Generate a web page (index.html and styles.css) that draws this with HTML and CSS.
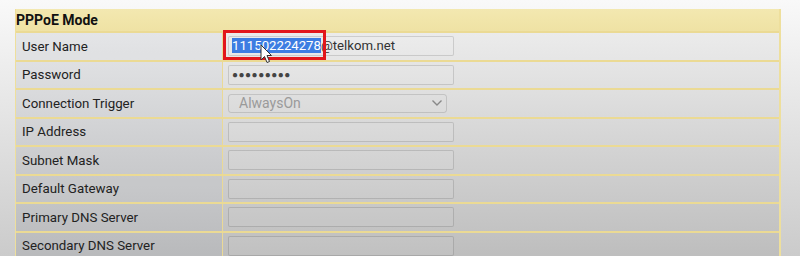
FILE: index.html
```html
<!DOCTYPE html>
<html lang="en">
<head>
  <meta charset="UTF-8">
  <title>PPPoE Mode</title>
  <link rel="stylesheet" href="styles.css">
</head>
<body>
  <div class="panel">
    <div class="panel-head">PPPoE Mode</div>

    <div class="row">
      <div class="label">User Name</div>
      <div class="value mark">
        <div class="field"><span class="sel">111502224278</span>@telkom.net</div>
        <div class="redbox"></div>
        <svg class="cursor" width="13" height="20" viewBox="0 0 13 20">
          <path d="M1 1 L1 16 L4.5 12.5 L7 18.5 L9.5 17.5 L7 11.5 L11.5 11.5 Z" fill="#fff" stroke="#333" stroke-width="1"/>
        </svg>
      </div>
    </div>

    <div class="row">
      <div class="label">Password</div>
      <div class="value"><div class="field dots">&#9679;&#9679;&#9679;&#9679;&#9679;&#9679;&#9679;&#9679;&#9679;</div></div>
    </div>

    <div class="row">
      <div class="label">Connection Trigger</div>
      <div class="value">
        <div class="select">
          <span>AlwaysOn</span>
          <svg width="12" height="8" viewBox="0 0 12 8"><path d="M1.5 1.5 L6 6 L10.5 1.5" fill="none" stroke="#888" stroke-width="1.4"/></svg>
        </div>
      </div>
    </div>

    <div class="row">
      <div class="label">IP Address</div>
      <div class="value"><div class="field"></div></div>
    </div>

    <div class="row">
      <div class="label">Subnet Mask</div>
      <div class="value"><div class="field"></div></div>
    </div>

    <div class="row">
      <div class="label">Default Gateway</div>
      <div class="value"><div class="field"></div></div>
    </div>

    <div class="row">
      <div class="label">Primary DNS Server</div>
      <div class="value"><div class="field"></div></div>
    </div>

    <div class="row">
      <div class="label">Secondary DNS Server</div>
      <div class="value"><div class="field"></div></div>
    </div>
  </div>
</body>
</html>
```

FILE: styles.css
```css
html, body {
  height: 100%;
}
body {
  margin: 0;
  padding: 9px 19px 0 15px;
  font-family: Roboto, "Liberation Sans", Arial, sans-serif;
  font-size: 13px;
  color: #222;
  background: linear-gradient(#f9f9f9, #cbcbcb 256px);
  overflow: hidden;
  box-sizing: border-box;
}
.panel {
  border-left: 1px solid #eedf9c;
  border-right: 2px solid #eedf9c;
  background: linear-gradient(#f0f0f0, #bdbdbd 250px);
}
.panel-head {
  height: 22px;
  line-height: 22px;
  padding-left: 0;
  font-size: 14px;
  font-weight: bold;
  color: #111;
  background: linear-gradient(#f3e8b0, #efe2a4);
}
.row {
  display: grid;
  grid-template-columns: 207px 1fr;
  height: 26.5px;
  border-top: 2px solid #ebda94;
}
.label {
  display: flex;
  align-items: center;
  padding-left: 6px;
  font-size: 13.3px;
  border-right: 1px solid #ead996;
  background: rgba(70, 100, 150, 0.04);
}
.value {
  display: flex;
  align-items: center;
  padding-left: 5px;
}
.field {
  box-sizing: border-box;
  width: 226px;
  height: 20px;
  padding-left: 3px;
  border: 1px solid rgba(0, 0, 0, 0.13);
  border-radius: 2px;
  background: rgba(255, 255, 255, 0.05);
  line-height: 18px;
  font-size: 13.2px;
  color: #333;
  white-space: nowrap;
}
.sel {
  background: #3d7de2;
  color: #fff;
}
.dots {
  font-size: 10px;
  letter-spacing: 0.5px;
  color: #444;
}
.select {
  box-sizing: border-box;
  width: 219px;
  height: 19px;
  padding: 0 3px 0 10px;
  border: 1px solid rgba(0, 0, 0, 0.12);
  border-radius: 3px;
  display: flex;
  align-items: center;
  justify-content: space-between;
  font-size: 14px;
  color: #9a9a9a;
}
.mark {
  position: relative;
}
.redbox {
  position: absolute;
  left: 0;
  top: -3px;
  width: 97px;
  height: 24px;
  border: 3px solid #e2161b;
}
.cursor {
  position: absolute;
  left: 37px;
  top: 11px;
}
```
